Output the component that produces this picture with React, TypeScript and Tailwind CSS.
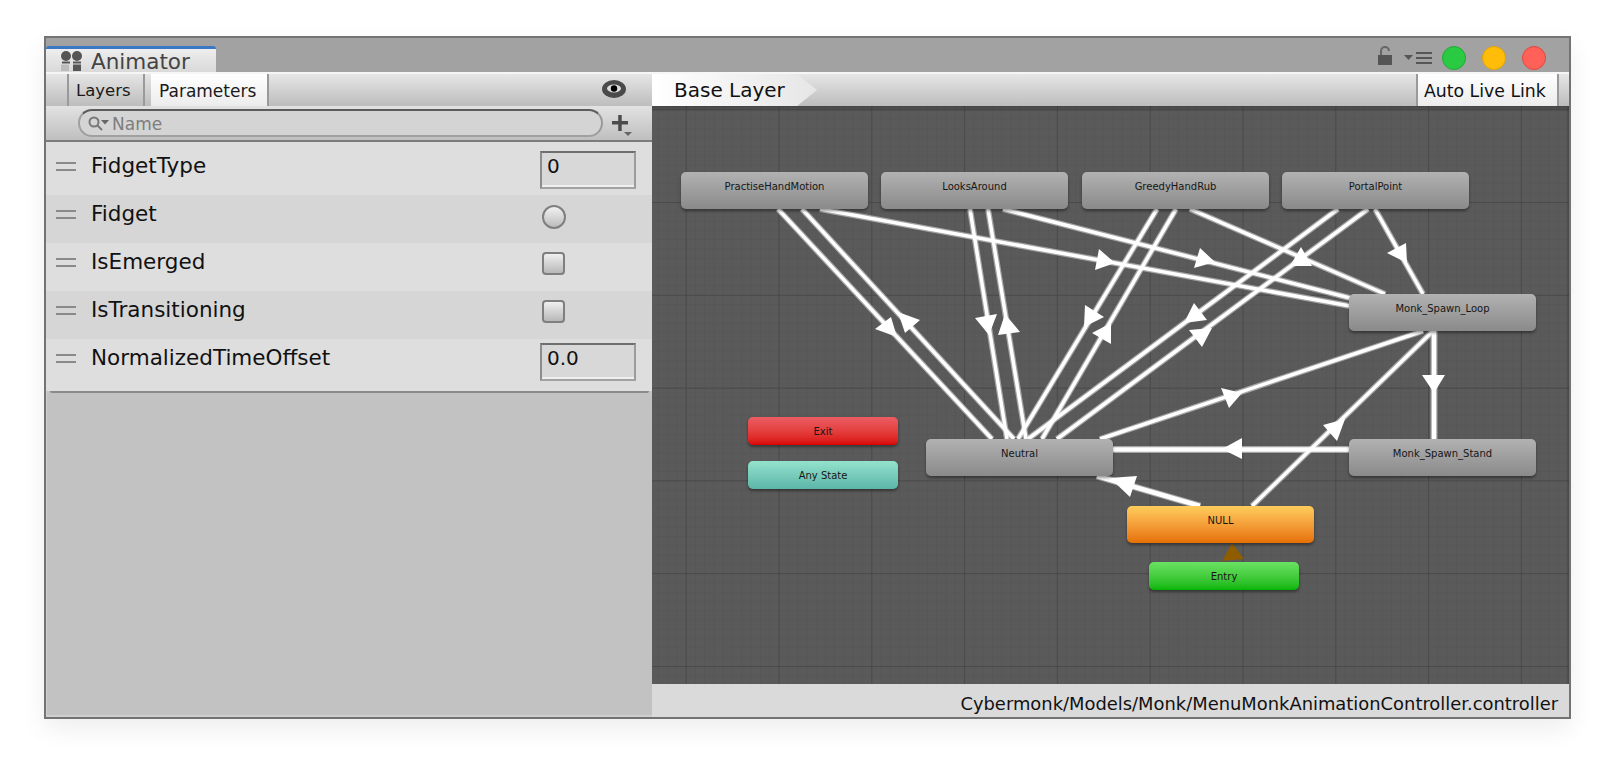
const edges: [number, number, number, number, number][] = [
  [778, 209, 992, 439, 0],
  [802, 209, 1014, 439, 0],
  [970, 209, 1007, 439, 0],
  [988, 209, 1026, 439, 0],
  [1157, 209, 1018, 439, 0],
  [1176, 209, 1042, 439, 0],
  [1338, 209, 1028, 439, 0],
  [1368, 209, 1057, 439, 0],
  [1423, 331, 1100, 439, 0],
  [1375, 209, 1423, 294, 0],
  [1190, 209, 1385, 294, 0],
  [1003, 209, 1350, 298, 0],
  [820, 209, 1350, 306, 0],
  [1434, 331, 1434, 439, 1],
  [1349, 449.5, 1113, 449.5, 1],
  [1200, 506, 1097, 476, 1],
  [1252, 506, 1433, 331, 0],
];

const arrows: string[] = [
  "875,329 891,317 897,337",
  "920,320 898,312 905,333",
  "975,318 997,314 989,335",
  "998,335 1020,332 1005,314",
  "1085,305 1104,317 1084,327",
  "1092,333 1111,323 1111,344",
  "1194,303 1207,320 1184,323",
  "1189,330 1212,328 1202,347",
  "1221,388 1242,393 1229,408",
  "1387,253 1406,243 1407,263",
  "1301,247 1312,266 1290,266",
  "1200,248 1215,262 1194,268",
  "1099,249 1115,263 1095,270",
  "1422,375 1445,375 1434,393",
  "1222,449 1242,438 1242,459",
  "1110,478 1137,476 1130,497",
  "1323,425 1345,419 1337,441",
];

type NodeInfo = { label: string; cls: string };
const nodes: NodeInfo[] = [
  { label: "PractiseHandMotion", cls: "left-[29px] top-[66px] w-[187px] h-[37px] from-[#b2b2b2] to-[#8a8a8a]" },
  { label: "LooksAround", cls: "left-[229px] top-[66px] w-[187px] h-[37px] from-[#b2b2b2] to-[#8a8a8a]" },
  { label: "GreedyHandRub", cls: "left-[430px] top-[66px] w-[187px] h-[37px] from-[#b2b2b2] to-[#8a8a8a]" },
  { label: "PortalPoint", cls: "left-[630px] top-[66px] w-[187px] h-[37px] from-[#b2b2b2] to-[#8a8a8a]" },
  { label: "Monk_Spawn_Loop", cls: "left-[697px] top-[188px] w-[187px] h-[37px] from-[#b2b2b2] to-[#8a8a8a]" },
  { label: "Monk_Spawn_Stand", cls: "left-[697px] top-[333px] w-[187px] h-[37px] from-[#b2b2b2] to-[#8a8a8a]" },
  { label: "Neutral", cls: "left-[274px] top-[333px] w-[187px] h-[37px] from-[#b2b2b2] to-[#8a8a8a]" },
  { label: "NULL", cls: "left-[475px] top-[400px] w-[187px] h-[37px] from-[#ffcc5c] to-[#e67000]" },
  { label: "Entry", cls: "left-[497px] top-[456px] w-[150px] h-[28px] from-[#6ae262] to-[#00b600]" },
  { label: "Exit", cls: "left-[96px] top-[311px] w-[150px] h-[28px] from-[#ec5d63] to-[#da0000]" },
  { label: "Any State", cls: "left-[96px] top-[355px] w-[150px] h-[28px] from-[#93e2cd] to-[#5cb6a8]" },
];

function Handle() {
  return (
    <div className="ml-[10px] mr-[15px] flex w-[20px] flex-col gap-[5px]">
      <div className="h-[2px] bg-[#8a8a8a]" />
      <div className="h-[2px] bg-[#8a8a8a]" />
    </div>
  );
}

function Field({ value }: { value: string }) {
  return (
    <div className="mt-[4px] h-[38px] w-[96px] self-start border-2 border-t-[#6e6e6e] border-r-[#9c9c9c] border-b-[#a2a2a2] border-l-[#8c8c8c] bg-[#d8d8d8]">
      <div className="h-full border-b-2 border-[#f0f0f0] pl-[5px] text-[20px] leading-[26px] text-[#111]">{value}</div>
    </div>
  );
}

function Row({ name, light, children }: { name: string; light: boolean; children: React.ReactNode }) {
  return (
    <div className={`flex h-[48px] items-start ${light ? "bg-[#dedede]" : "bg-[#d6d6d6]"}`}>
      <div className="flex h-[38px] w-[494px] shrink-0 items-center">
        <Handle />
        <span className="text-[21.5px] leading-[38px] text-[#111]">{name}</span>
      </div>
      {children}
    </div>
  );
}

export default function App() {
  return (
    <div className="h-[772px] w-[1616px] overflow-hidden bg-white pl-[44px] pt-[36px] font-['DejaVu_Sans',sans-serif]">
      <div className="flex h-[683px] w-[1527px] flex-col border-2 border-[#737373] shadow-[0_10px_24px_rgba(0,0,0,0.07)]">
        {/* title bar */}
        <div className="flex h-[34px] shrink-0 items-end bg-[#a2a2a2]">
          <div className="flex h-[26px] w-[170px] items-start rounded-t-[3px] border-t-[3px] border-[#3b78c4] bg-gradient-to-b from-[#eeeeee] to-[#d9d9d9] pl-[14px]">
            <svg width="24" height="20" viewBox="0 0 24 20" className="mt-[2px]">
              <circle cx="6" cy="5" r="5" fill="#555" />
              <circle cx="17" cy="5" r="5" fill="#555" />
              <rect x="2" y="10.500" width="8" height="2" fill="#555" />
              <rect x="13" y="10.500" width="8" height="2" fill="#555" />
              <rect x="1" y="13.500" width="8" height="6.500" fill="#bbb" />
              <rect x="13" y="13.500" width="8" height="6.500" fill="#555" />
            </svg>
            <span className="ml-[7px] mt-[2px] text-[21.5px] leading-[22px] text-[#444]">Animator</span>
          </div>
          <div className="ml-auto flex h-full items-start pr-[23px] pt-[8px]">
            <svg width="16" height="20" viewBox="0 0 16 20" className="mr-[11px]">
              <path d="M4 9V5a4 4 0 0 1 8 0" fill="none" stroke="#666" strokeWidth="2" />
              <rect x="1" y="9" width="14" height="10" fill="#555" />
            </svg>
            <svg width="30" height="14" viewBox="0 0 30 14" className="mr-[8px] mt-[6px]">
              <path d="M0 3h9l-4.500 5z" fill="#555" />
              <rect x="12" y="0" width="16" height="2" fill="#555" />
              <rect x="12" y="5" width="16" height="2" fill="#555" />
              <rect x="12" y="10" width="16" height="2" fill="#555" />
            </svg>
            <div className="flex gap-[16px]">
              <div className="h-[24px] w-[24px] rounded-full border border-[#22a836] bg-[#2acb42]" />
              <div className="h-[24px] w-[24px] rounded-full border border-[#e0a500] bg-[#ffbd0a]" />
              <div className="h-[24px] w-[24px] rounded-full border border-[#e0493f] bg-[#ff6058]" />
            </div>
          </div>
        </div>

        {/* body */}
        <div className="flex min-h-0 flex-1">
          {/* left */}
          <div className="flex w-[606px] shrink-0 flex-col bg-[#c2c2c2]">
            <div className="flex h-[34px] shrink-0 border-t-2 border-[#f6f6f6] bg-gradient-to-b from-[#e6e6e6] to-[#bdbdbd] pl-[21px]">
              <div className="flex h-full w-[78px] items-center border-x-2 border-[#9a9a9a] pl-[7px] pt-[3px] text-[16.5px] text-[#1a1a1a]">Layers</div>
              <div className="ml-[6px] flex h-full w-[118px] items-center border-r-2 border-[#9a9a9a] bg-gradient-to-b from-[#ffffff] to-[#ececec] pl-[8px] pt-[3px] text-[17px] text-[#1a1a1a]">Parameters</div>
              <svg width="26" height="20" viewBox="0 0 26 20" className="ml-[332px] mt-[5px]">
                <ellipse cx="13" cy="10" rx="12" ry="9" fill="#4a4a4a" />
                <ellipse cx="13" cy="9.500" rx="7" ry="4" fill="#dddddd" />
                <circle cx="13" cy="9.500" r="3.200" fill="#000" />
              </svg>
            </div>
            <div className="flex h-[36px] shrink-0 items-center border-b-2 border-[#7c7c7c] bg-gradient-to-b from-[#e2e2e2] to-[#bfbfbf] pl-[32px]">
              <div className="flex h-[28px] w-[525px] items-center rounded-full border-2 border-t-[#5c5c5c] border-r-[#9a9a9a] border-b-[#a0a0a0] border-l-[#a0a0a0] bg-[#d4d4d4] pl-[6px]">
                <svg width="26" height="18" viewBox="0 0 26 18">
                  <circle cx="8" cy="8" r="4.500" fill="none" stroke="#777" strokeWidth="2" />
                  <path d="M11 11l5 5" stroke="#777" strokeWidth="2" />
                  <path d="M15 6h8l-4 4.500z" fill="#666" />
                </svg>
                <span className="pt-[3px] text-[17px] text-[#7d7d7d]">Name</span>
              </div>
              <svg width="22" height="24" viewBox="0 0 22 24" className="ml-[8px] mt-[6px]">
                <rect x="1" y="7" width="16" height="3.500" fill="#4c4c4c" />
                <rect x="7.200" y="1" width="3.500" height="16" fill="#4c4c4c" />
                <path d="M13 18h8l-4 4z" fill="#666" />
              </svg>
            </div>
            <div className="bg-[#dedede] pb-[4px] pt-[5px]">
              <Row name="FidgetType" light>
                <Field value="0" />
              </Row>
              <Row name="Fidget" light={false}>
                <div className="ml-[2px] mt-[10px] h-[24px] w-[24px] rounded-full border-2 border-[#7f7f7f] bg-gradient-to-b from-[#f2f2f2] to-[#bcbcbc]" />
              </Row>
              <Row name="IsEmerged" light>
                <div className="ml-[2px] mt-[9px] h-[23px] w-[23px] rounded-[4px] border-2 border-[#7f7f7f] bg-gradient-to-b from-[#f0f0f0] to-[#b8b8b8]" />
              </Row>
              <Row name="IsTransitioning" light={false}>
                <div className="ml-[2px] mt-[9px] h-[23px] w-[23px] rounded-[4px] border-2 border-[#7f7f7f] bg-gradient-to-b from-[#f0f0f0] to-[#b8b8b8]" />
              </Row>
              <Row name="NormalizedTimeOffset" light>
                <Field value="0.0" />
              </Row>
            </div>
            <div className="flex-1 border-b-2 border-l border-[#cfcfcf]">
              <div className="mx-[3px] h-[2px] rounded-b-[2px] bg-[#8a8a8a]" />
            </div>
          </div>

          {/* right */}
          <div className="flex min-w-0 flex-1 flex-col">
            <div className="flex h-[34px] shrink-0 border-t-2 border-[#f6f6f6] bg-gradient-to-b from-[#e6e6e6] to-[#bdbdbd]">
              <div className="flex h-full w-[165px] items-center bg-gradient-to-r from-[#ffffff] to-[#e6e6e6] pl-[22px] text-[20px] text-[#111] [clip-path:polygon(0_0,88%_0,100%_50%,88%_100%,0_100%)]">Base Layer</div>
              <div className="ml-auto mr-[10px] flex h-full w-[143px] items-center border-x-2 border-[#9a9a9a] bg-gradient-to-b from-[#ffffff] to-[#ececec] pl-[6px] pt-[3px] text-[17.3px] text-[#111]">Auto Live Link</div>
            </div>
            <div className="relative h-[578px] shrink-0 overflow-hidden bg-[#5a5a5a]">
              <svg className="absolute inset-0" width="917" height="578" viewBox="652 106 917 578">
                <defs>
                  <pattern id="minor" x="685.7" y="202" width="9.28" height="9.28" patternUnits="userSpaceOnUse">
                    <path d="M0 0H9.280M0 0V9.280" stroke="#535353" strokeWidth="1" fill="none" />
                  </pattern>
                  <pattern id="major" x="685.7" y="202" width="92.8" height="92.8" patternUnits="userSpaceOnUse">
                    <path d="M0 0H92.800M0 0V92.800" stroke="#454545" strokeWidth="1.500" fill="none" />
                  </pattern>
                </defs>
                <rect x="652" y="106" width="917" height="578" fill="url(#minor)" />
                <rect x="652" y="106" width="917" height="578" fill="url(#major)" />
                {edges.map(([a, b, c, d, t], i) => (
                  <line key={`g${i}`} x1={a} y1={b} x2={c} y2={d} stroke="#c4c4c4" strokeOpacity="0.7" strokeWidth={t ? 7 : 6} />
                ))}
                {edges.map(([a, b, c, d, t], i) => (
                  <line key={`w${i}`} x1={a} y1={b} x2={c} y2={d} stroke="#ffffff" strokeWidth={t ? 4.5 : 3.5} />
                ))}
                {arrows.map((p, i) => (
                  <polygon key={i} points={p} fill="#ffffff" />
                ))}
                <polygon points="1232,543 1222,561 1244,559" fill="#8f5c00" />
              </svg>
              <div className="absolute inset-x-0 top-0 h-[6px] bg-gradient-to-b from-[rgba(0,0,0,0.22)] to-transparent" />
              <div className="absolute inset-y-0 right-0 w-[3px] bg-gradient-to-l from-[rgba(0,0,0,0.2)] to-transparent" />
              {nodes.map((n) => (
                <div
                  key={n.label}
                  className={`absolute rounded-[5px] bg-gradient-to-b pt-[7px] text-center text-[10px] leading-[16px] text-[#161616] shadow-[0_2px_3px_rgba(0,0,0,0.4)] ${n.cls}`}
                >
                  {n.label}
                </div>
              ))}
            </div>
            <div className="flex flex-1 items-end justify-end bg-[#dadada] pr-[11px] text-[17.9px] leading-[26px] text-[#111]">
              Cybermonk/Models/Monk/MenuMonkAnimationController.controller
            </div>
          </div>
        </div>
      </div>
    </div>
  );
}
